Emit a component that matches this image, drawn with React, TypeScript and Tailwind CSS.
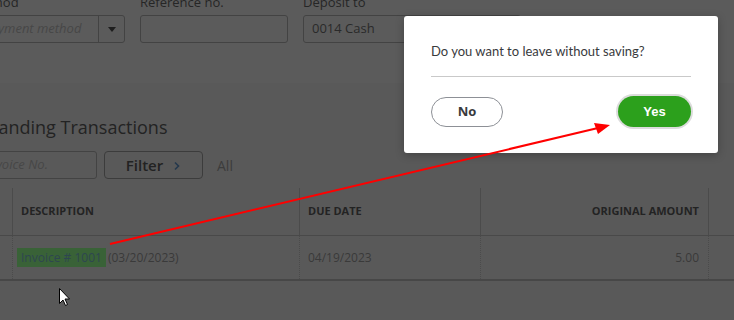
import React from "react";

const font = { fontFamily: '"Open Sans", "Liberation Sans", sans-serif' };

function Field({
  label,
  width,
  value,
  placeholder,
  dropdown,
  padLeft = "pl-[8px]",
}: {
  label: string;
  width: string;
  value?: string;
  placeholder?: string;
  dropdown?: boolean;
  padLeft?: string;
}) {
  return (
    <div className={`flex shrink-0 flex-col gap-[5px] ${width}`}>
      <span className="h-[16px] text-[13px] leading-[16px] text-[#262626]">{label}</span>
      <div className="flex h-[28px] items-stretch rounded-[3px] border border-[#434343]">
        <div className={`flex flex-1 items-center overflow-hidden whitespace-nowrap pr-[4px] text-[13px] ${padLeft}`}>
          {value ? (
            <span className="text-[#2a2a2a]">{value}</span>
          ) : (
            <span className="italic text-[#474747]">{placeholder}</span>
          )}
        </div>
        {dropdown && (
          <div className="flex w-[26px] items-center justify-center border-l border-[#434343]">
            <span className="h-0 w-0 border-x-[4px] border-t-[5px] border-x-transparent border-t-[#1e1e1e]" />
          </div>
        )}
      </div>
    </div>
  );
}

export default function App() {
  return (
    <div className="relative h-[320px] w-[734px] overflow-hidden bg-[#595959]" style={font}>
      {/* top fields */}
      <div className="h-[83px] bg-[#5b5b5b] pt-px">
        <div className="-mt-[7px] ml-[-86px] flex gap-[15px]">
          <Field
            label="Payment method"
            width="w-[211px]"
            placeholder="Choose payment method"
            dropdown
            padLeft="pl-[23px]"
          />
          <Field label="Reference no." width="w-[148px]" />
          <Field label="Deposit to" width="w-[218px]" value="0014 Cash" dropdown />
        </div>
      </div>

      {/* heading */}
      <div className="ml-[-48px] pt-[32px] text-[18px] leading-[24px] text-[#232323]">
        Outstanding Transactions
      </div>

      {/* filter row */}
      <div className="mt-[12px] ml-[-52px] flex items-center gap-[7px]">
        <div className="flex h-[28px] w-[149px] items-center rounded-[3px] border border-[#434343] px-[8px] text-[13px] italic text-[#474747]">
          Find Invoice No.
        </div>
        <div className="flex h-[28px] w-[99px] items-center justify-center gap-[10px] rounded-[4px] border border-[#3c3c3c] text-[15px] font-semibold text-[#222]">
          Filter
          <svg width="8" height="10" viewBox="0 0 8 10" className="mt-[1px]">
            <path d="M2 1.5 L5.5 5 L2 8.5" stroke="#24384c" strokeWidth="1.6" fill="none" />
          </svg>
        </div>
        <span className="ml-[7px] text-[14px] text-[#3c3c3c]">All</span>
      </div>

      {/* table */}
      <div className="mt-[9px] w-[760px]">
        <div className="flex h-[48px] border-b border-[#494949] text-[11px] font-bold text-[#232323]">
          <div className="w-[13px] border-r border-[#4b4b4b]" />
          <div className="flex w-[287px] items-center border-r border-[#4b4b4b] pl-[8px]">DESCRIPTION</div>
          <div className="flex w-[181px] items-center border-r border-[#4b4b4b] pl-[8px]">DUE DATE</div>
          <div className="flex w-[228px] items-center justify-end border-r border-[#4b4b4b] pr-[9px]">
            ORIGINAL AMOUNT
          </div>
          <div className="flex-1" />
        </div>
        <div className="flex h-[45px] border-b-2 border-[#474747] text-[12px] text-[#3a3a3a]">
          <div className="w-[13px] border-r border-dotted border-[#4b4b4b]" />
          <div className="flex w-[287px] items-center border-r border-dotted border-[#4b4b4b] pl-[4px]">
            <span className="bg-[#396237] px-[4px] leading-[19px] text-[#2e4650]">Invoice # 1001</span>
            <span className="ml-[2px]">(03/20/2023)</span>
          </div>
          <div className="flex w-[181px] items-center border-r border-dotted border-[#4b4b4b] pl-[8px]">
            04/19/2023
          </div>
          <div className="flex w-[228px] items-center justify-end border-r border-dotted border-[#4b4b4b] pr-[9px]">
            5.00
          </div>
          <div className="flex-1" />
        </div>
      </div>

      {/* modal */}
      <div className="absolute left-[404px] top-[16px] flex h-[137px] w-[314px] flex-col rounded-[3px] bg-white px-[27px] pt-[26px] shadow-[0_2px_8px_rgba(0,0,0,0.25)]">
        <p className="text-[13px] leading-[18px] text-[#393a3d]" style={{ fontFamily: 'Lato, "Open Sans", sans-serif' }}>
          Do you want to leave without saving?
        </p>
        <div className="mt-[16px] h-px bg-[#c9c9c9]" />
        <div className="mt-[19px] flex items-center justify-between">
          <button className="flex h-[30px] w-[72px] items-center justify-center rounded-full border border-[#8d9096] text-[13px] font-bold text-[#393a3d]">
            No
          </button>
          <button
            className="flex h-[31px] w-[73px] items-center justify-center rounded-full bg-[#2ca01c] text-[13px] font-bold text-white ring-2 ring-[#dcdcdc]"
            style={{ fontFamily: '"Liberation Sans", sans-serif' }}
          >
            Yes
          </button>
        </div>
      </div>

      {/* red annotation arrow */}
      <svg className="absolute left-0 top-0" width="734" height="320" viewBox="0 0 734 320">
        <line x1="110" y1="244" x2="598" y2="128" stroke="#ff0000" strokeWidth="2" />
        <polygon points="610,125 594,123 598,134" fill="#ff0000" />
      </svg>

      {/* mouse cursor */}
      <svg className="absolute left-[59px] top-[288px]" width="12" height="19" viewBox="0 0 12 19">
        <path d="M0.5 0.5 L0.5 15.5 L4 12 L6.5 17.5 L8.5 16.5 L6 11 L10.5 11 Z" fill="#ffffff" stroke="#000000" strokeWidth="1" />
      </svg>
    </div>
  );
}
